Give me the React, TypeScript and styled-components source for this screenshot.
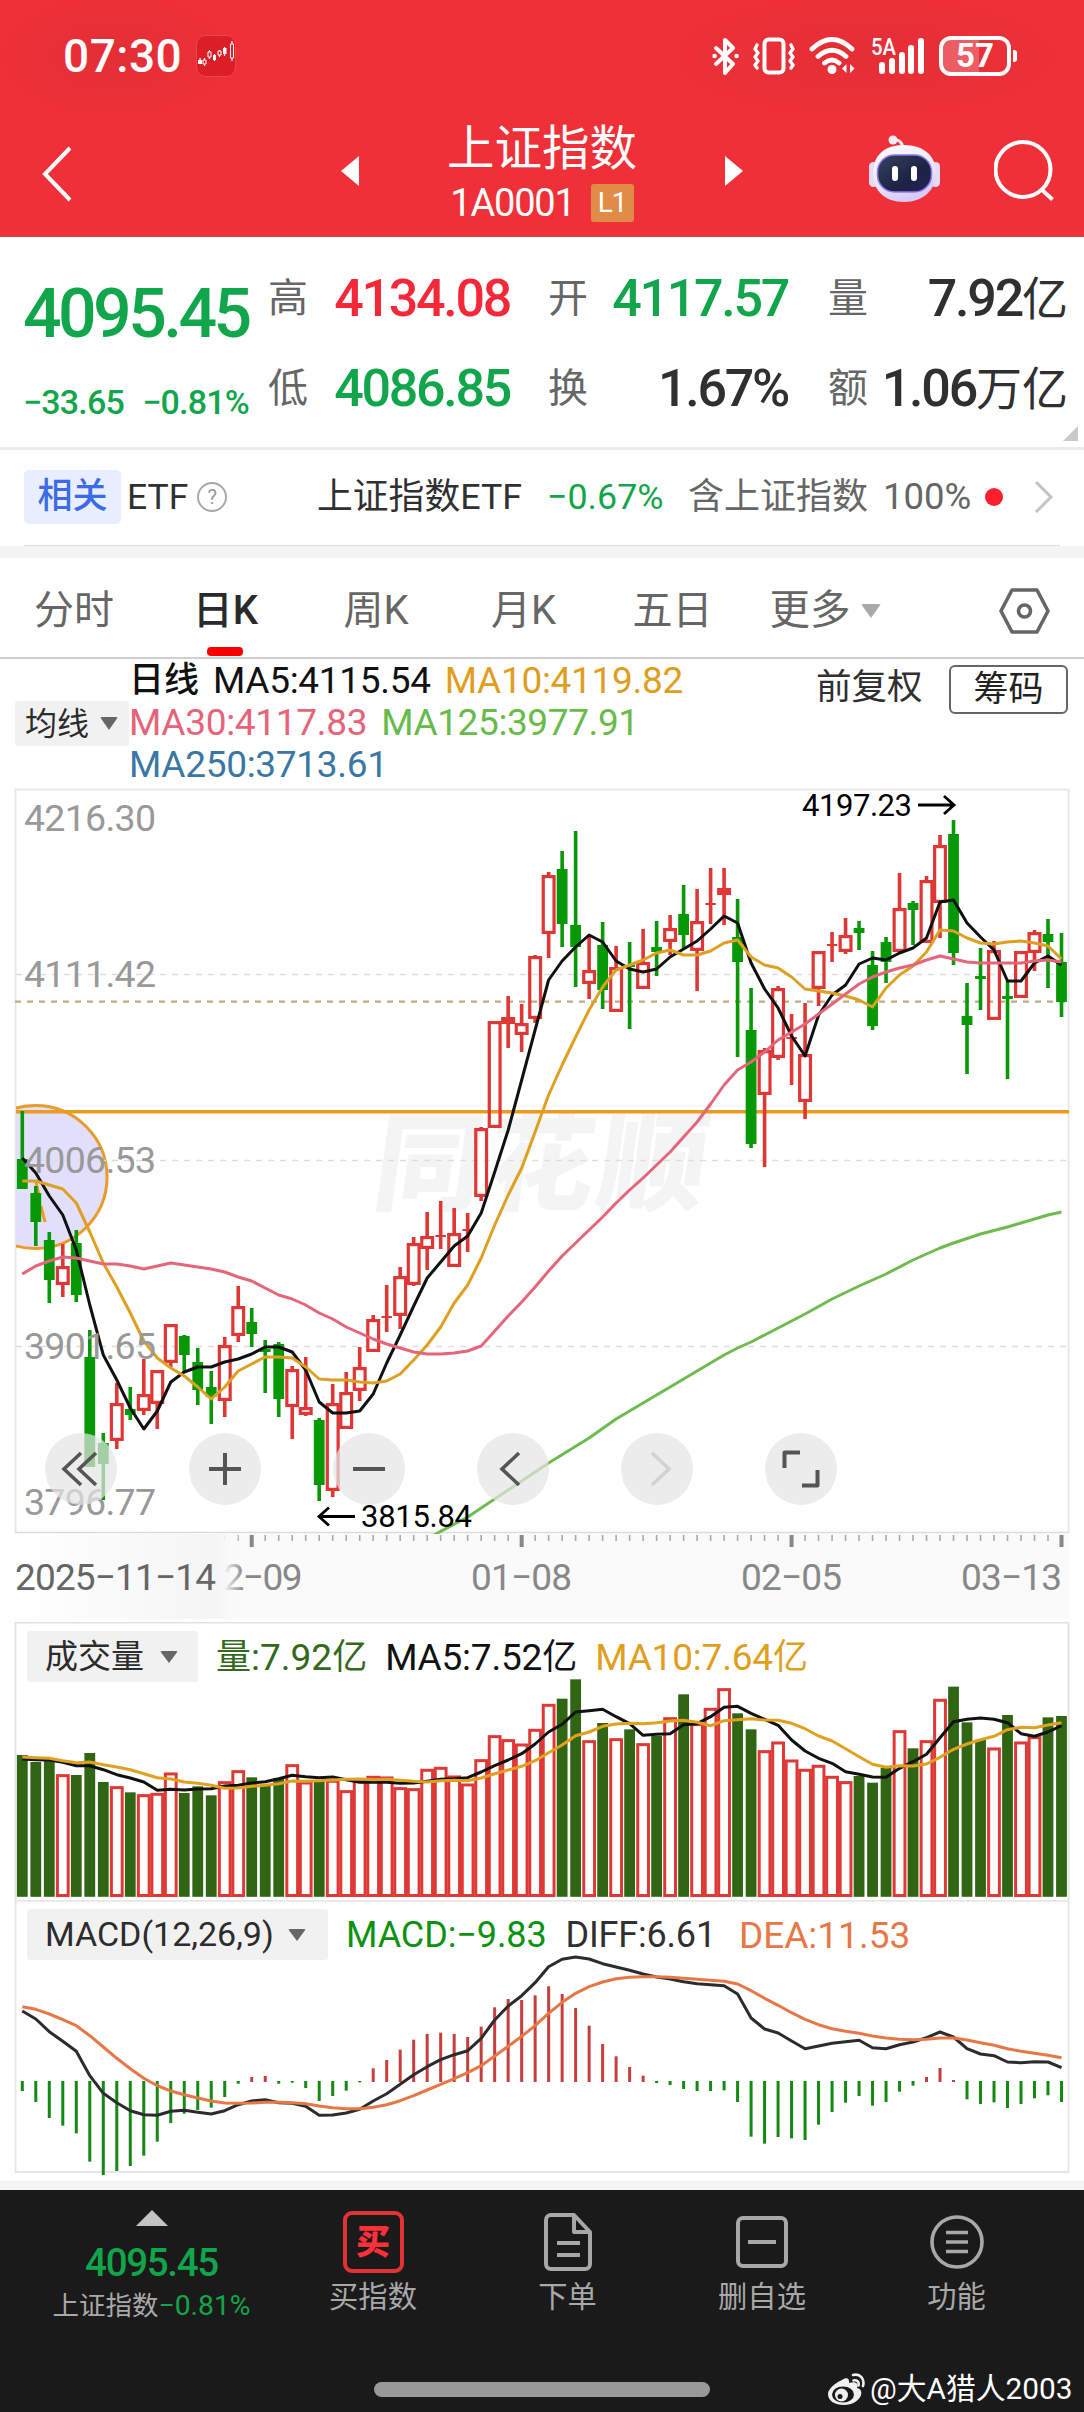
import React from 'react';
import styled, { createGlobalStyle } from 'styled-components';

const UP = '#df3735';
const DOWN = '#069806';
const FONT = `Roboto, "Noto Sans CJK SC", sans-serif`;

const GlobalStyle = createGlobalStyle`
  * { box-sizing: border-box; }
  html, body { margin: 0; padding: 0; background: #fff; }
  body { font-family: ${FONT}; -webkit-font-smoothing: antialiased; }
  svg { display: block; flex: none; }
`;

const Screen = styled.main`
  width: 1084px;
  height: 2412px;
  display: flex;
  flex-direction: column;
  overflow: hidden;
  background: #fff;
`;

interface TextProps {
  $size: number;
  $color?: string;
  $weight?: number;
  $track?: number;
}
const Text = styled.span<TextProps>`
  font-size: ${(p) => p.$size}px;
  line-height: ${(p) => Math.round(p.$size * 1.2)}px;
  color: ${(p) => p.$color ?? 'inherit'};
  font-weight: ${(p) => p.$weight ?? 400};
  letter-spacing: ${(p) => p.$track ?? 0}px;
  white-space: nowrap;
`;

/* ---------- header ---------- */

const Header = styled.header`
  height: 237px;
  background: #ef3038;
  color: #fff;
  border-bottom: 1px solid #c9434a;
  display: flex;
  flex-direction: column;
`;
const StatusBar = styled.div`
  height: 112px;
  padding: 0 67px 0 63px;
  display: flex;
  align-items: center;
  justify-content: space-between;
  background:
    radial-gradient(ellipse 130px 70px at 115px 56px, rgba(120, 30, 40, 0.1), transparent),
    radial-gradient(ellipse 220px 70px at 865px 56px, rgba(120, 30, 40, 0.1), transparent);
`;
const StatusGroup = styled.div<{ $gap: number }>`
  display: flex;
  align-items: center;
  gap: ${(p) => p.$gap}px;
`;
const NavBar = styled.div`
  height: 124px;
  display: grid;
  grid-template-columns: 115px 226px 402px 125px 126px 90px;
`;
const NavCell = styled.div<{ $left?: number; $top: number }>`
  padding: ${(p) => p.$top}px 0 0 ${(p) => p.$left ?? 0}px;
`;
const TitleBlock = styled.div`
  display: flex;
  align-items: flex-start;
  justify-content: space-between;
  padding-top: 7px;
`;
const TitleText = styled.div`
  display: flex;
  flex-direction: column;
  align-items: center;
  padding-top: 2px;
`;
const CodeRow = styled.div`
  display: flex;
  align-items: center;
  gap: 16px;
  margin-top: 5px;
  height: 40px;
`;
const LevelBadge = styled.span`
  width: 43px;
  height: 38px;
  border-radius: 3px;
  background: #e08c47;
  display: flex;
  align-items: center;
  justify-content: center;
`;
const ArrowSlot = styled.div`
  margin-top: 37px;
`;

const AppIcon = () => (
  <svg width="40" height="42" viewBox="0 0 40 42">
    <rect x="0.5" y="0.5" width="39" height="41" rx="9" fill="#dc1f27" stroke="#e8484c" />
    <path d="M4 23v6M8.500 23v8M13.500 15v9M18.500 19v7M23.500 15v7M28.500 12v9M36 6v20" stroke="#fff" strokeWidth="1.200" />
    <path d="M2 25h4v4H2zM17 20h3v5h-3zM27 13h3.500v6H27z" fill="#fff" />
    <path d="M7 25h3v4H7zM12 17h3v5h-3zM22 16h3v4h-3zM34.500 9h3v14h-3z" fill="#dc1f27" stroke="#fff" />
  </svg>
);

const Bluetooth = () => (
  <svg width="27" height="38" viewBox="0 0 27 38" fill="none" stroke="#fff" strokeWidth="4" strokeLinejoin="round" strokeLinecap="round">
    <path d="M4 11l17 16-8 9V3l8 8L4 27" />
    <path d="M2.500 19h.1M24.500 19h.1" strokeWidth="4.500" />
  </svg>
);
const Vibrate = () => (
  <svg width="44" height="38" viewBox="0 0 44 38" fill="none" stroke="#fff" strokeWidth="4" strokeLinecap="round" strokeLinejoin="round">
    <rect x="12.500" y="2.500" width="19" height="33" rx="4" />
    <path d="M5 8l-2 4 3 4-3 4 3 4-3 4 2 3M39 8l2 4-3 4 3 4-3 4 3 4-2 3" strokeWidth="3.400" />
  </svg>
);
const Wifi = () => (
  <svg width="48" height="38" viewBox="0 0 48 38" fill="none" stroke="#fff" strokeWidth="4.800" strokeLinecap="round">
    <path d="M3 12Q23 -7 43 12M9 19.500Q23 7 37 19.500M15.500 26Q23 20 30 26" />
    <circle cx="23" cy="32.500" r="4.500" fill="#fff" stroke="none" />
    <path d="M37.500 27v9l-4.500-4.500zM41 36v-9l4.500 4.500z" fill="#fff" stroke="none" />
  </svg>
);
const Signal = () => (
  <svg width="56" height="52" viewBox="0 -6 56 52">
    <text x="1" y="19" fontSize="23" fontWeight="500" fill="#fff" fontFamily="Roboto" textLength="25" lengthAdjust="spacingAndGlyphs">5A</text>
    <path d="M12 29v6M22 25v10M32 19v16M41 12v23M51 5v30" stroke="#fff" strokeWidth="6" strokeLinecap="round" />
  </svg>
);
const Battery = styled.div`
  display: flex;
  align-items: center;
  gap: 2px;
  &::after {
    content: '';
    width: 4px;
    height: 12px;
    border-radius: 0 3px 3px 0;
    background: #fff;
  }
`;
const BatteryCell = styled.div`
  width: 72px;
  height: 40px;
  border: 4px solid #fff;
  border-radius: 12px;
  display: flex;
  align-items: center;
  justify-content: center;
  background: linear-gradient(90deg, rgba(255, 255, 255, 0.22) 57%, transparent 57%);
`;

const Robot = () => (
  <svg width="74" height="68" viewBox="0 0 74 68">
    <defs>
      <linearGradient id="shell" x1="0" y1="0" x2="0.400" y2="1">
        <stop offset="0" stopColor="#fff" />
        <stop offset="0.700" stopColor="#e9e2fb" />
        <stop offset="1" stopColor="#d6cbf8" />
      </linearGradient>
      <linearGradient id="visor" x1="0" y1="0" x2="1" y2="1">
        <stop offset="0" stopColor="#39425f" />
        <stop offset="0.600" stopColor="#1c2345" />
        <stop offset="1" stopColor="#252255" />
      </linearGradient>
    </defs>
    <rect x="1" y="27" width="9" height="25" rx="4.500" fill="#e4dcf6" />
    <rect x="63" y="27" width="9" height="25" rx="4.500" fill="#e4dcf6" />
    <path d="M26 5q8-1 9 9" fill="none" stroke="#f4eefe" strokeWidth="3" />
    <circle cx="25" cy="5" r="4.500" fill="#f7e8f6" />
    <path d="M36 10C56 10 68 21 68 38S55 67 36 67 5 56 5 38 17 10 36 10z" fill="url(#shell)" />
    <rect x="9.500" y="20" width="54" height="37" rx="17" fill="url(#visor)" stroke="#8f78e8" strokeWidth="1.500" />
    <path d="M27 34v9M46 34v9" stroke="#fff" strokeWidth="6" strokeLinecap="round" />
  </svg>
);

/* ---------- quote summary ---------- */

const Summary = styled.section`
  height: 210px;
  display: grid;
  grid-template-columns: 268px 242px 38px 240px 40px 240px;
`;
const Spacer = styled.div<{ $h?: number }>`
  height: ${(p) => p.$h ?? 0}px;
`;
const Headline = styled.div`
  padding: 36px 0 0 23px;
  display: flex;
  flex-direction: column;
`;
const ChangeRow = styled.div`
  display: flex;
  justify-content: space-between;
  width: 226px;
  margin-top: 27px;
`;
const Pairs = styled.div`
  padding-top: 31px;
  display: flex;
  flex-direction: column;
  gap: 28px;
`;
const Pair = styled.div`
  display: flex;
  height: 62px;
  align-items: center;
  justify-content: space-between;
`;
const Value = styled.span`
  display: flex;
  align-items: center;
  color: #303030;
`;
const Corner = styled.div`
  height: 3px;
  border-bottom: 3px solid #ededed;
  position: relative;
  &::after {
    content: '';
    position: absolute;
    right: 6px;
    bottom: 6px;
    border-left: 15px solid transparent;
    border-bottom: 15px solid #c9c9c9;
  }
`;

/* ---------- related ETF ---------- */

const EtfRow = styled.section`
  height: 96px;
  margin: 0 24px;
  border-bottom: 1px solid #dcdcdc;
  display: flex;
  align-items: center;
  padding-bottom: 1px;
`;
const RelatedTag = styled.span`
  width: 97px;
  height: 54px;
  border-radius: 5px;
  background: #e8eeff;
  display: flex;
  align-items: center;
  justify-content: center;
`;
const Cell = styled.span<{ $w: number; $pad?: number }>`
  width: ${(p) => p.$w}px;
  padding-left: ${(p) => p.$pad ?? 0}px;
  display: flex;
  align-items: center;
`;
const Help = styled.span`
  width: 30px;
  height: 30px;
  margin-left: 9px;
  border: 2px solid #a9a9a9;
  border-radius: 50%;
  display: flex;
  align-items: center;
  justify-content: center;
`;
const Dot = styled.span`
  width: 18px;
  height: 18px;
  border-radius: 50%;
  background: #fe1f2d;
  margin-right: 31px;
`;
const Band = styled.div<{ $h: number }>`
  height: ${(p) => p.$h}px;
  background: #f4f4f4;
`;

/* ---------- period tabs ---------- */

const Tabs = styled.nav`
  height: 101px;
  border-bottom: 2px solid #d0d0d0;
  display: grid;
  grid-template-columns: 148px 155px 146px 149px 149px 164px 173px;
`;
const Tab = styled.div<{ $active?: boolean; $shift?: number }>`
  height: 99px;
  display: flex;
  align-items: center;
  justify-content: center;
  gap: 10px;
  padding-top: 6px;
  padding-left: ${(p) => Math.max(p.$shift ?? 0, 0)}px;
  padding-right: ${(p) => Math.max(-(p.$shift ?? 0), 0)}px;
  position: relative;
  color: ${(p) => (p.$active ? '#2a2a2a' : '#666')};
  &::after {
    content: '';
    display: ${(p) => (p.$active ? 'block' : 'none')};
    position: absolute;
    bottom: 1px;
    left: 59px;
    width: 36px;
    height: 9px;
    border-radius: 4px;
    background: #fa0000;
  }
`;
const Caret = styled.i<{ $w: number; $h: number; $color: string }>`
  border-left: ${(p) => p.$w / 2}px solid transparent;
  border-right: ${(p) => p.$w / 2}px solid transparent;
  border-top: ${(p) => p.$h}px solid ${(p) => p.$color};
  border-radius: 2px;
`;

/* ---------- moving-average legend ---------- */

const Legend = styled.section`
  height: 129px;
  display: flex;
  align-items: flex-start;
  padding-left: 15px;
`;
const Chip = styled.div<{ $w: number; $h: number; $gap: number; $pad: number }>`
  width: ${(p) => p.$w}px;
  height: ${(p) => p.$h}px;
  padding-left: ${(p) => p.$pad}px;
  gap: ${(p) => p.$gap}px;
  border-radius: 3px;
  background: #f1f1f1;
  color: #2c2c2c;
  display: flex;
  align-items: center;
`;
const ChipSlot = styled.div`
  padding-top: 42px;
  width: 114px;
`;
const LegendLines = styled.div`
  width: 687px;
  display: flex;
  flex-direction: column;
  padding-top: 1px;
`;
const LegendLine = styled.div`
  height: 42px;
  display: flex;
  align-items: center;
  gap: 14px;
`;
const AdjustLabel = styled.div`
  padding-top: 7px;
  width: 133px;
`;
const ChipsButton = styled.button`
  width: 119px;
  height: 49px;
  margin-top: 6px;
  padding: 0;
  border: 2px solid #666;
  border-radius: 6px;
  background: #fff;
  font-family: inherit;
  display: flex;
  align-items: center;
  justify-content: center;
`;

/* ---------- charts ---------- */

const ChartBox = styled.section<{ $h: number }>`
  height: ${(p) => p.$h}px;
  position: relative;
`;
const Toolbar = styled.div`
  position: absolute;
  left: 45px;
  top: 645px;
  display: flex;
  gap: 72px;
`;
const RoundButton = styled.button`
  width: 72px;
  height: 72px;
  padding: 0;
  border: 0;
  border-radius: 50%;
  background: rgba(228, 228, 228, 0.714);
  display: flex;
  align-items: center;
  justify-content: center;
`;
const PanelHead = styled.div`
  position: absolute;
  left: 27px;
  top: 9px;
  height: 51px;
  display: flex;
  align-items: center;
`;
const PanelItem = styled.span<{ $ml: number }>`
  margin-left: ${(p) => p.$ml}px;
  padding-top: 2px;
  display: flex;
  align-items: center;
`;

const X0 = 22.3;
const STEP = 13.496;
const xAt = (i: number) => X0 + STEP * i;

/* wick top, body top, body bottom, wick bottom, rising */
type Candle = [number, number, number, number, 0 | 1];
const candles: Candle[] = [
  [1111, 1159, 1189, 1189, 0], [1186, 1193, 1222, 1246, 0], [1232, 1240, 1280, 1303, 0], [1244, 1266, 1285, 1297, 1],
  [1230, 1243, 1295, 1302, 0], [1330, 1357, 1467, 1467, 0], [1433, 1443, 1464, 1500, 0], [1383, 1403, 1441, 1449, 1],
  [1387, 1409, 1415, 1420, 0], [1359, 1394, 1411, 1415, 1], [1370, 1370, 1404, 1429, 1], [1324, 1324, 1363, 1367, 1],
  [1335, 1336, 1355, 1373, 0], [1348, 1362, 1390, 1405, 0], [1371, 1387, 1397, 1424, 0], [1337, 1345, 1401, 1417, 1],
  [1286, 1306, 1336, 1342, 1], [1308, 1322, 1334, 1347, 0], [1340, 1349, 1352, 1393, 0], [1342, 1344, 1399, 1417, 0],
  [1366, 1369, 1407, 1439, 1], [1357, 1407, 1415, 1416, 1], [1418, 1420, 1485, 1501, 0], [1384, 1403, 1491, 1497, 1],
  [1372, 1392, 1429, 1429, 1], [1347, 1367, 1391, 1401, 1], [1315, 1319, 1352, 1352, 1], [1285, 1316, 1318, 1332, 1],
  [1267, 1276, 1316, 1329, 1], [1237, 1243, 1285, 1286, 1], [1212, 1236, 1249, 1270, 1], [1201, 1235, 1237, 1249, 1],
  [1208, 1233, 1267, 1267, 1], [1213, 1229, 1231, 1252, 1], [1127, 1128, 1197, 1201, 1], [1021, 1021, 1128, 1128, 1],
  [996, 1017, 1024, 1048, 1], [1004, 1023, 1035, 1052, 1], [955, 956, 1019, 1023, 1], [872, 875, 934, 958, 1],
  [851, 869, 924, 947, 0], [831, 925, 947, 987, 0], [937, 970, 984, 999, 1], [922, 945, 990, 1009, 0],
  [946, 967, 1012, 1012, 1], [942, 965, 967, 1029, 0], [929, 962, 989, 989, 1], [921, 947, 952, 976, 0],
  [915, 928, 942, 955, 1], [885, 914, 935, 948, 0], [889, 921, 951, 991, 1], [868, 903, 905, 924, 1],
  [868, 888, 895, 925, 1], [899, 937, 962, 1057, 0], [988, 1030, 1144, 1148, 0], [1048, 1050, 1095, 1167, 1],
  [986, 988, 1058, 1060, 1], [1014, 1037, 1039, 1085, 1], [1003, 1054, 1102, 1119, 1], [951, 951, 989, 1006, 1],
  [932, 944, 946, 962, 1], [918, 935, 952, 954, 1], [921, 928, 933, 950, 0], [951, 965, 1026, 1030, 0],
  [937, 942, 962, 983, 0], [873, 908, 952, 952, 1], [901, 903, 910, 945, 0], [876, 880, 943, 943, 1],
  [835, 845, 903, 938, 1], [820, 834, 953, 965, 0], [983, 1016, 1025, 1074, 0], [948, 976, 979, 1010, 0],
  [941, 950, 1020, 1020, 1], [981, 996, 999, 1079, 0], [951, 951, 998, 998, 1], [930, 932, 953, 971, 1],
  [919, 934, 942, 988, 0], [933, 962, 1002, 1017, 0],
];

const ma5 = [1158, 1173, 1196, 1215, 1250, 1305, 1355, 1380, 1408, 1429, 1411, 1382, 1372, 1367, 1367, 1362, 1359, 1354, 1347, 1347, 1352, 1370, 1402, 1413, 1413, 1411, 1394, 1363, 1335, 1306, 1278, 1262, 1246, 1236, 1213, 1172, 1130, 1080, 1030, 980, 961, 947, 935, 942, 961, 969, 972, 969, 957, 949, 941, 929, 916, 923, 963, 989, 1008, 1036, 1056, 1015, 995, 985, 964, 958, 960, 953, 948, 938, 902, 900, 923, 937, 950, 981, 981, 963, 956, 965];
const ma10 = [1181, 1181, 1185, 1189, 1203, 1232, 1263, 1287, 1313, 1341, 1358, 1368, 1376, 1387, 1399, 1387, 1371, 1364, 1357, 1357, 1358, 1367, 1379, 1380, 1380, 1382, 1383, 1381, 1374, 1360, 1345, 1327, 1303, 1285, 1258, 1225, 1195, 1168, 1132, 1095, 1065, 1037, 1010, 987, 970, 965, 960, 953, 950, 955, 955, 951, 943, 940, 957, 965, 968, 977, 989, 991, 993, 996, 1000, 1007, 988, 975, 966, 952, 930, 931, 938, 943, 944, 942, 941, 943, 946, 959];
const ma30 = [1274, 1266, 1261, 1257, 1258, 1261, 1264, 1264, 1266, 1269, 1266, 1263, 1265, 1267, 1269, 1272, 1277, 1281, 1288, 1295, 1299, 1305, 1313, 1319, 1327, 1333, 1339, 1344, 1348, 1352, 1354, 1354, 1353, 1351, 1346, 1331, 1316, 1302, 1287, 1271, 1256, 1243, 1230, 1217, 1203, 1190, 1178, 1165, 1152, 1137, 1122, 1104, 1085, 1070, 1062, 1052, 1040, 1032, 1024, 1014, 1004, 994, 984, 977, 972, 968, 965, 960, 956, 959, 962, 963, 963, 963, 963, 961, 960, 962];
const ma125: [number, number][] = [[30.5, 1535], [33, 1517], [39, 1463], [42, 1438], [44, 1419], [46, 1403], [48, 1387], [50, 1371], [52, 1355], [53, 1348], [54, 1342], [56, 1328], [57, 1321], [58, 1314], [60, 1299], [62, 1286], [64, 1274], [66, 1260], [68, 1248], [69, 1243], [71, 1234], [73, 1227], [74, 1223], [76, 1215], [77, 1212]];

/* volume and MACD series are stored in thirds of a pixel from the panel origin */
const volTop = [435, 456, 452, 493, 495, 429, 516, 529, 547, 553, 549, 488, 549, 529, 556, 514, 481, 502, 526, 504, 463, 515, 512, 510, 541, 511, 498, 500, 532, 535, 477, 471, 497, 521, 448, 376, 388, 401, 357, 282, 266, 208, 391, 339, 385, 358, 400, 378, 322, 253, 340, 294, 235, 310, 358, 421, 395, 449, 477, 465, 498, 514, 498, 518, 474, 361, 415, 391, 267, 230, 337, 389, 413, 315, 395, 379, 322, 318];
const volMa5 = [447, 449, 450, 457, 467, 467, 479, 494, 504, 516, 541, 538, 540, 537, 536, 528, 526, 519, 515, 506, 496, 500, 503, 501, 509, 517, 516, 517, 520, 519, 514, 508, 506, 503, 486, 467, 450, 431, 402, 366, 343, 306, 302, 298, 320, 341, 376, 373, 371, 344, 341, 320, 292, 289, 310, 328, 346, 390, 423, 445, 460, 485, 493, 501, 502, 475, 455, 433, 383, 335, 328, 324, 328, 338, 371, 379, 366, 347];
const volMa10 = [441, 443, 445, 452, 458, 456, 464, 471, 479, 491, 503, 507, 516, 520, 526, 535, 534, 529, 526, 521, 513, 514, 512, 510, 508, 507, 509, 508, 511, 514, 516, 512, 511, 512, 504, 491, 480, 469, 452, 428, 405, 377, 366, 349, 342, 340, 341, 338, 333, 331, 337, 347, 332, 329, 326, 330, 331, 340, 356, 378, 393, 416, 440, 463, 472, 467, 468, 462, 442, 418, 402, 389, 379, 359, 352, 353, 345, 338];
const macd = [573, 606, 654, 677, 700, 785, 825, 813, 798, 767, 725, 669, 641, 630, 623, 591, 551, 531, 528, 551, 548, 564, 603, 588, 572, 547, 505, 480, 449, 419, 402, 398, 402, 411, 380, 322, 297, 300, 286, 259, 282, 324, 377, 432, 469, 501, 527, 549, 555, 567, 573, 573, 571, 606, 710, 731, 711, 715, 720, 674, 636, 608, 588, 617, 606, 575, 557, 531, 504, 540, 598, 612, 607, 624, 612, 595, 586, 606];
const diff = [333, 357, 395, 424, 454, 527, 580, 608, 632, 644, 646, 634, 631, 637, 642, 632, 614, 603, 599, 608, 610, 619, 646, 645, 639, 628, 603, 581, 553, 524, 500, 479, 464, 452, 415, 360, 318, 287, 248, 200, 178, 171, 177, 191, 201, 211, 222, 231, 237, 245, 251, 254, 257, 282, 354, 387, 399, 423, 446, 438, 430, 425, 421, 443, 446, 434, 426, 413, 396, 411, 446, 462, 467, 486, 488, 485, 486, 503];
const dea = [320, 328, 342, 359, 377, 407, 441, 475, 506, 535, 557, 573, 584, 594, 603, 609, 610, 609, 607, 607, 608, 611, 618, 623, 626, 626, 622, 614, 602, 587, 570, 553, 536, 518, 497, 468, 439, 409, 377, 340, 307, 280, 260, 246, 236, 232, 230, 230, 232, 235, 238, 241, 244, 252, 272, 295, 316, 338, 358, 374, 386, 394, 400, 408, 414, 418, 419, 418, 414, 414, 420, 428, 436, 446, 454, 460, 466, 473];

const pts = (v: number[], f: (y: number) => number = (y) => y) =>
  v.map((y, i) => `${xAt(i).toFixed(1)},${f(y).toFixed(1)}`).join(' ');

const Line = ({ points, color, width = 3 }: { points: string; color: string; width?: number }) => (
  <polyline points={points} fill="none" stroke={color} strokeWidth={width} strokeLinejoin="round" />
);

const axisPrices: [string, number][] = [['4216.30', 818], ['4111.42', 973.5], ['4006.53', 1159.5], ['3901.65', 1345.5], ['3796.77', 1501.5]];

const PriceChart = () => (
  <svg width="1084" height="746" viewBox="0 788 1084 746">
    <defs>
      <clipPath id="plot"><rect x="16" y="789" width="1053" height="746" /></clipPath>
    </defs>
    <text x="0" y="0" transform="translate(370 1202) skewX(-8)" fontSize="108" fontWeight="900" fill="#f4f4f4"
      fontFamily="Noto Sans CJK SC" textLength="332">同花顺</text>
    <path d="M15.500 1533V789.500H1068.500V1533" fill="none" stroke="#e8e8e8" strokeWidth="2" />
    <path d="M15 1532.500H1069" stroke="#dcdcdc" strokeWidth="1.500" />
    <g clipPath="url(#plot)">
      <circle cx="35.500" cy="1177" r="71.500" fill="#e1dffc" stroke="#eb9a2c" strokeWidth="3" />
    </g>
    {[974.5, 1160.5, 1346.5].map((y) => (
      <path key={y} d={`M16 ${y}H1066`} stroke="#dedede" strokeWidth="1.300" strokeDasharray="6 6" />
    ))}
    <path d="M15 1001.700H1068" stroke="#c6a97e" strokeWidth="2.200" strokeDasharray="6 6" />
    <path d="M16 1111.700H1069" stroke="#eb9a22" strokeWidth="3.600" />
    <path d="M36 1182l3 13M41 1206l4 16" stroke="#eb9a22" strokeWidth="3" />
    {candles.map(([hi, top, bot, lo, up], i) => {
      const x = xAt(i);
      if (!up)
        return (
          <g key={i} fill={DOWN}>
            <rect x={x - 1.8} y={hi} width="3.600" height={lo - hi} />
            <rect x={x - 5.4} y={top} width="10.800" height={Math.max(bot - top, 2)} />
          </g>
        );
      if (bot - top < 8)
        return (
          <g key={i} fill={UP}>
            <rect x={x - 1.8} y={hi} width="3.600" height={lo - hi} />
            <rect x={x - (bot - top > 4 ? 7 : 5.2)} y={top} width={bot - top > 4 ? 14 : 10.4} height={bot - top} />
          </g>
        );
      return (
        <g key={i}>
          <rect x={x - 1.8} y={hi} width="3.600" height={top - hi} fill={UP} />
          <rect x={x - 1.8} y={bot} width="3.600" height={lo - bot} fill={UP} />
          <rect x={x - 5.4} y={top + 1.6} width="10.800" height={bot - top - 3.2} fill="none" stroke={UP} strokeWidth="3.200" />
        </g>
      );
    })}
    <Line points={pts(ma5)} color="#111" />
    <Line points={pts(ma10)} color="#dda022" />
    <Line points={pts(ma30)} color="#e5667a" />
    <Line points={ma125.map(([i, y]) => `${xAt(i).toFixed(1)},${y}`).join(' ')} color="#6fbb50" />
    {axisPrices.map(([label, y]) => (
      <text key={label} x="24" y={y + 13} fontSize="37.500" fill="#999" fontFamily="Roboto" textLength="132">{label}</text>
    ))}
    <g fill="none" stroke="#000" strokeWidth="2.800">
      <path d="M918 805H953M944 796l10 9-10 9M355 1516.500H320M329 1507.500l-10 9 10 9" />
    </g>
    <g fontSize="31" fontFamily="Roboto" fill="#000">
      <text x="802" y="815.500" textLength="110">4197.23</text>
      <text x="361" y="1527" textLength="111">3815.84</text>
    </g>
  </svg>
);

const DateAxis = () => (
  <svg width="1084" height="88" viewBox="0 1534 1084 88">
    <defs>
      <linearGradient id="fade" x1="0" x2="1" y1="0" y2="0">
        <stop offset="0" stopColor="#fff" />
        <stop offset="0.880" stopColor="#f5f5f5" />
        <stop offset="0.930" stopColor="#f8f8f8" stopOpacity="0.850" />
        <stop offset="1" stopColor="#fafafa" stopOpacity="0" />
      </linearGradient>
    </defs>
    <rect x="15" y="1534" width="1054" height="85" fill="#fafafa" />
    {candles.map((_, i) => {
      const major = i % 20 === 17;
      return <rect key={i} x={xAt(i) - (major ? 2 : 0.8)} y="1535" width={major ? 4 : 1.6} height={major ? 12 : 6} fill={major ? '#888' : '#aaa'} />;
    })}
    <g fontSize="37" fontFamily="Roboto" fill="#888">
      <text x="223.500" y="1589.500" textLength="79">2−09</text>
      <text x="471" y="1589.500" textLength="101">01−08</text>
      <text x="741" y="1589.500" textLength="101">02−05</text>
      <text x="961" y="1589.500" textLength="101">03−13</text>
    </g>
    <rect x="15" y="1534" width="228" height="85" fill="url(#fade)" />
    <text x="15" y="1589.500" fontSize="37" fontFamily="Roboto" fill="#666" textLength="201">2025−11−14</text>
  </svg>
);

const VolumeChart = () => {
  const f = (y: number) => 1610 + y / 3;
  return (
    <svg width="1084" height="278" viewBox="0 1622 1084 278">
      <path d="M15.500 1900V1622.500H1068.500V1900" fill="none" stroke="#e2e2e2" strokeWidth="1.800" />
      {volTop.map((v, i) => {
        const x = xAt(i);
        const y = f(v);
        return candles[i][4] ? (
          <rect key={i} x={x - 5.4} y={y + 1.3} width="10.800" height={1895.5 - y - 1.3} fill="#fff" stroke="#df3936" strokeWidth="3" />
        ) : (
          <rect key={i} x={x - 5.4} y={y} width="10.800" height={1896.8 - y} fill="#306613" />
        );
      })}
      <Line points={pts(volMa5, f)} color="#111" />
      <Line points={pts(volMa10, f)} color="#e0a020" />
    </svg>
  );
};

const MacdChart = () => {
  const f = (y: number) => 1900 + y / 3;
  return (
    <svg width="1084" height="281" viewBox="0 1900 1084 281">
      <path d="M15.500 1900.800H1068.500V2172H15.500Z" fill="none" stroke="#e6e6e6" strokeWidth="1.800" />
      {macd.map((v, i) => {
        const y = f(v);
        const up = v < 544;
        return <rect key={i} x={xAt(i) - 1.5} y={up ? y : 2081} width="3" height={up ? 2082 - y : y - 2081} fill={up ? '#c63e3e' : '#148a14'} />;
      })}
      <Line points={pts(diff, f)} color="#2c2c2c" />
      <Line points={pts(dea, f)} color="#e67848" />
    </svg>
  );
};

/* ---------- bottom bar ---------- */

const Footer = styled.footer`
  height: 222px;
  background: #1a1a1a;
  color: #a8a8a8;
  display: flex;
  flex-direction: column;
`;
const Actions = styled.div`
  height: 181px;
  padding-left: 27px;
  display: grid;
  grid-template-columns: 249px 194px 195px 194px 195px;
`;
const IndexCell = styled.div`
  display: flex;
  flex-direction: column;
  align-items: center;
  padding-top: 20px;
`;
const IndexName = styled.div`
  display: flex;
  align-items: center;
  margin-top: 3px;
`;
const Action = styled.div`
  display: flex;
  flex-direction: column;
  align-items: center;
  padding-top: 21px;
`;
const IconSlot = styled.div`
  height: 62px;
  display: flex;
  align-items: center;
  margin-bottom: 7px;
`;
const BuyIcon = styled.div`
  width: 61px;
  height: 62px;
  border: 4px solid #e23236;
  border-radius: 9px;
  display: flex;
  align-items: center;
  justify-content: center;
`;
const HomeRow = styled.div`
  display: grid;
  grid-template-columns: 374px 336px 117px 250px;
  height: 34px;
  align-items: center;
`;
const HomeBar = styled.div`
  grid-column: 2;
  height: 15px;
  border-radius: 8px;
  background: #999;
`;
const Credit = styled.div`
  grid-column: 4;
  display: flex;
  align-items: center;
  gap: 4px;
`;

const Weibo = () => (
  <svg width="39" height="33" viewBox="0 0 39 33">
    <path d="M15 7c4-3 8-2 7 3 6-2 10 0 8 5 4 1 5 4 4 7-2 6-9 10-17 10C8 32 1 28 1 21 1 16 8 10 15 7z" fill="#f0f0f0" />
    <ellipse cx="16" cy="21.500" rx="11" ry="8" fill="#1a1a1a" />
    <circle cx="14.500" cy="22" r="6.500" fill="#f0f0f0" />
    <circle cx="13" cy="23.500" r="2.500" fill="#1a1a1a" />
    <path d="M26 2c7-2 12 4 10 11M26.500 7.500c3.500-1 6 1.500 5 5" fill="none" stroke="#f0f0f0" strokeWidth="2.600" strokeLinecap="round" />
  </svg>
);

const actionStroke = { fill: 'none', stroke: '#a8a8a8', strokeWidth: 4, strokeLinejoin: 'round' as const };

const G = '#12a64c';
const label = '#666';

export default function App() {
  return (
    <Screen>
      <GlobalStyle />
      <Header>
        <StatusBar>
          <StatusGroup $gap={14}>
            <Text $size={46} $weight={500} $track={0.5}>07:30</Text>
            <AppIcon />
          </StatusGroup>
          <StatusGroup $gap={13}>
            <Bluetooth />
            <Vibrate />
            <Wifi />
            <Signal />
            <Battery>
              <BatteryCell><Text $size={33} $weight={700}>57</Text></BatteryCell>
            </Battery>
          </StatusGroup>
        </StatusBar>
        <NavBar>
          <NavCell $left={41} $top={34}>
            <svg width="32" height="56" viewBox="0 0 32 56"><path d="M29 2L4 28l25 26" fill="none" stroke="#fff" strokeWidth="4" /></svg>
          </NavCell>
          <Spacer />
          <TitleBlock>
            <ArrowSlot><svg width="18" height="30" viewBox="0 0 18 30"><path d="M18 0v30L0 15z" fill="#fff" /></svg></ArrowSlot>
            <TitleText>
              <Text $size={47.5}>上证指数</Text>
              <CodeRow>
                <Text $size={38} $track={-1.2}>1A0001</Text>
                <LevelBadge><Text $size={28} $track={-1}>L1</Text></LevelBadge>
              </CodeRow>
            </TitleText>
            <ArrowSlot><svg width="18" height="30" viewBox="0 0 18 30"><path d="M0 0v30l18-15z" fill="#fff" /></svg></ArrowSlot>
          </TitleBlock>
          <Spacer />
          <NavCell $top={23}><Robot /></NavCell>
          <NavCell $top={27}>
            <svg width="62" height="64" viewBox="1 0 62 64" fill="none" stroke="#fff" strokeWidth="4">
              <circle cx="30" cy="30.500" r="27.500" /><path d="M48 50l11.500 10.500" />
            </svg>
          </NavCell>
        </NavBar>
      </Header>

      <Summary>
        <Headline>
          <Text $size={68} $weight={500} $color={G} $track={-3.6}>4095.45</Text>
          <ChangeRow>
            <Text $size={34} $color={G} $weight={500} $track={-0.8}>−33.65</Text>
            <Text $size={34} $color={G} $weight={500} $track={-0.8}>−0.81%</Text>
          </ChangeRow>
        </Headline>
        <Pairs>
          <Pair><Text $size={40} $color={label}>高</Text><Text $size={52} $weight={500} $color="#f5283a" $track={-2.3}>4134.08</Text></Pair>
          <Pair><Text $size={40} $color={label}>低</Text><Text $size={52} $weight={500} $color={G} $track={-2.3}>4086.85</Text></Pair>
        </Pairs>
        <Spacer />
        <Pairs>
          <Pair><Text $size={40} $color={label}>开</Text><Text $size={52} $weight={500} $color={G} $track={-2.3}>4117.57</Text></Pair>
          <Pair><Text $size={40} $color={label}>换</Text><Value><Text $size={52} $weight={500} $track={-2.3}>1.67%</Text></Value></Pair>
        </Pairs>
        <Spacer />
        <Pairs>
          <Pair><Text $size={40} $color={label}>量</Text><Value><Text $size={52} $weight={500} $track={-2.2}>7.92</Text><Text $size={46}>亿</Text></Value></Pair>
          <Pair><Text $size={40} $color={label}>额</Text><Value><Text $size={52} $weight={500} $track={-2.2}>1.06</Text><Text $size={46}>万亿</Text></Value></Pair>
        </Pairs>
      </Summary>
      <Corner />

      <EtfRow>
        <RelatedTag><Text $size={35} $color="#3b6be8" $weight={500}>相关</Text></RelatedTag>
        <Cell $w={196} $pad={6}>
          <Text $size={35.5} $color="#303030">ETF</Text>
          <Help><Text $size={20} $color="#999">?</Text></Help>
        </Cell>
        <Cell $w={230}><Text $size={35.8} $color="#303030">上证指数ETF</Text></Cell>
        <Cell $w={141}><Text $size={35.8} $color={G}>−0.67%</Text></Cell>
        <Cell $w={195}><Text $size={36} $color={label}>含上证指数</Text></Cell>
        <Cell $w={102}><Text $size={36.5} $color={label}>100%</Text></Cell>
        <Dot />
        <svg width="20" height="34" viewBox="0 0 20 34"><path d="M2 2l15 15L2 32" fill="none" stroke="#c4c4c4" strokeWidth="3" /></svg>
      </EtfRow>
      <Band $h={12} />

      <Tabs>
        <Tab><Text $size={40}>分时</Text></Tab>
        <Tab $active><Text $size={40} $weight={500}>日K</Text></Tab>
        <Tab><Text $size={40}>周K</Text></Tab>
        <Tab><Text $size={40}>月K</Text></Tab>
        <Tab><Text $size={40}>五日</Text></Tab>
        <Tab $shift={-8}><Text $size={40.5}>更多</Text><Caret $w={21} $h={14} $color="#aaa" /></Tab>
        <Tab $shift={52}>
          <svg width="54" height="48" viewBox="0 0 54 48" fill="none" stroke="#666" strokeWidth="3.600" strokeLinejoin="round">
            <path d="M15 3h25l11 21-11 21H15L4 24z" /><circle cx="27.500" cy="24" r="6" />
          </svg>
        </Tab>
      </Tabs>

      <Legend>
        <ChipSlot><Chip $w={114} $h={45} $pad={10} $gap={11}><Text $size={32}>均线</Text><Caret $w={18} $h={13} $color="#666" /></Chip></ChipSlot>
        <LegendLines>
          <LegendLine>
            <Text $size={35} $color="#111" $weight={500}>日线</Text>
            <Text $size={37} $color="#111" $track={-0.3}>MA5:4115.54</Text>
            <Text $size={37} $color="#e09e1e" $track={-0.3}>MA10:4119.82</Text>
          </LegendLine>
          <LegendLine>
            <Text $size={37} $color="#e5647a" $track={-0.3}>MA30:4117.83</Text>
            <Text $size={37} $color="#68bb4a" $track={-0.4}>MA125:3977.91</Text>
          </LegendLine>
          <LegendLine><Text $size={37} $color="#3a77a4" $track={-0.3}>MA250:3713.61</Text></LegendLine>
        </LegendLines>
        <AdjustLabel><Text $size={35.5} $color="#303030">前复权</Text></AdjustLabel>
        <ChipsButton><Text $size={35} $color="#222">筹码</Text></ChipsButton>
      </Legend>

      <ChartBox $h={746}>
        <PriceChart />
        <Toolbar>
          <RoundButton>
            <svg width="72" height="72" viewBox="0 0 72 72" fill="none" stroke="#555" strokeWidth="3.600"><path d="M36 20L19 36l17 16M51 20L34 36l17 16" /></svg>
          </RoundButton>
          <RoundButton>
            <svg width="72" height="72" viewBox="0 0 72 72" stroke="#555" strokeWidth="4"><path d="M20 36h32M36 20v32" /></svg>
          </RoundButton>
          <RoundButton>
            <svg width="72" height="72" viewBox="0 0 72 72" stroke="#555" strokeWidth="4"><path d="M20 36h32" /></svg>
          </RoundButton>
          <RoundButton>
            <svg width="72" height="72" viewBox="0 0 72 72" fill="none" stroke="#555" strokeWidth="3.600"><path d="M42 20L25 36l17 16" /></svg>
          </RoundButton>
          <RoundButton>
            <svg width="72" height="72" viewBox="0 0 72 72" fill="none" stroke="#d2d2d2" strokeWidth="3.600"><path d="M31 20l17 16-17 16" /></svg>
          </RoundButton>
          <RoundButton>
            <svg width="72" height="72" viewBox="0 0 72 72" fill="none" stroke="#555" strokeWidth="4"><path d="M35 19.500H19.500V35M37 52.500H52.500V37" strokeLinejoin="round" /></svg>
          </RoundButton>
        </Toolbar>
      </ChartBox>
      <DateAxis />

      <ChartBox $h={278}>
        <VolumeChart />
        <PanelHead>
          <Chip $w={171} $h={51} $pad={18} $gap={16}><Text $size={33}>成交量</Text><Caret $w={18} $h={12} $color="#666" /></Chip>
          <PanelItem $ml={18}><Text $size={35} $color="#33691a">量</Text><Text $size={37} $color="#33691a">:7.92</Text><Text $size={35} $color="#33691a">亿</Text></PanelItem>
          <PanelItem $ml={18}><Text $size={37} $color="#111" $track={-0.2}>MA5:7.52</Text><Text $size={35} $color="#111">亿</Text></PanelItem>
          <PanelItem $ml={18}><Text $size={37} $color="#e09e1e" $track={-0.2}>MA10:7.64</Text><Text $size={35} $color="#e09e1e">亿</Text></PanelItem>
        </PanelHead>
      </ChartBox>

      <ChartBox $h={281}>
        <MacdChart />
        <PanelHead>
          <Chip $w={301} $h={51} $pad={18} $gap={14}><Text $size={34}>MACD(12,26,9)</Text><Caret $w={18} $h={12} $color="#666" /></Chip>
          <PanelItem $ml={18}><Text $size={36} $color="#0b920f" $track={-0.1}>MACD:−9.83</Text></PanelItem>
          <PanelItem $ml={19}><Text $size={36} $color="#303030" $track={-0.2}>DIFF:6.61</Text></PanelItem>
          <PanelItem $ml={23}><Text $size={37} $color="#e67848">DEA:11.53</Text></PanelItem>
        </PanelHead>
      </ChartBox>
      <Band $h={9} />

      <Footer>
        <Actions>
          <IndexCell>
            <svg width="32" height="16" viewBox="0 0 32 16"><path d="M16 0l16 16H0z" fill="#c4c4c4" /></svg>
            <Spacer $h={14} />
            <Text $size={38.5} $color={G} $weight={500} $track={-1.3}>4095.45</Text>
            <IndexName><Text $size={26.5}>上证指数</Text><Text $size={28.3} $color={G}>−0.81%</Text></IndexName>
          </IndexCell>
          <Action>
            <IconSlot><BuyIcon><Text $size={34} $weight={900} $color="#fb3038">买</Text></BuyIcon></IconSlot>
            <Text $size={29.3}>买指数</Text>
          </Action>
          <Action>
            <IconSlot>
              <svg width="50" height="60" viewBox="0 0 50 60" {...actionStroke}>
                <path d="M8 3h23l16 17v32a5 5 0 0 1-5 5H8a5 5 0 0 1-5-5V8a5 5 0 0 1 5-5zM31 3v17h16M14 31h23M14 43h23" />
              </svg>
            </IconSlot>
            <Text $size={29.3}>下单</Text>
          </Action>
          <Action>
            <IconSlot>
              <svg width="54" height="54" viewBox="0 0 54 54" {...actionStroke}>
                <rect x="3" y="3" width="48" height="48" rx="5" /><path d="M13 27h28" />
              </svg>
            </IconSlot>
            <Text $size={29.3}>删自选</Text>
          </Action>
          <Action>
            <IconSlot>
              <svg width="56" height="56" viewBox="0 0 56 56" {...actionStroke} strokeWidth={3.6}>
                <circle cx="28" cy="28" r="25" /><path d="M17 18.500h22M17 28h22M17 37.500h22" />
              </svg>
            </IconSlot>
            <Text $size={29.3}>功能</Text>
          </Action>
        </Actions>
        <HomeRow>
          <HomeBar />
          <Credit><Weibo /><Text $size={29.8} $color="#fff">@大A猎人2003</Text></Credit>
        </HomeRow>
      </Footer>
    </Screen>
  );
}
